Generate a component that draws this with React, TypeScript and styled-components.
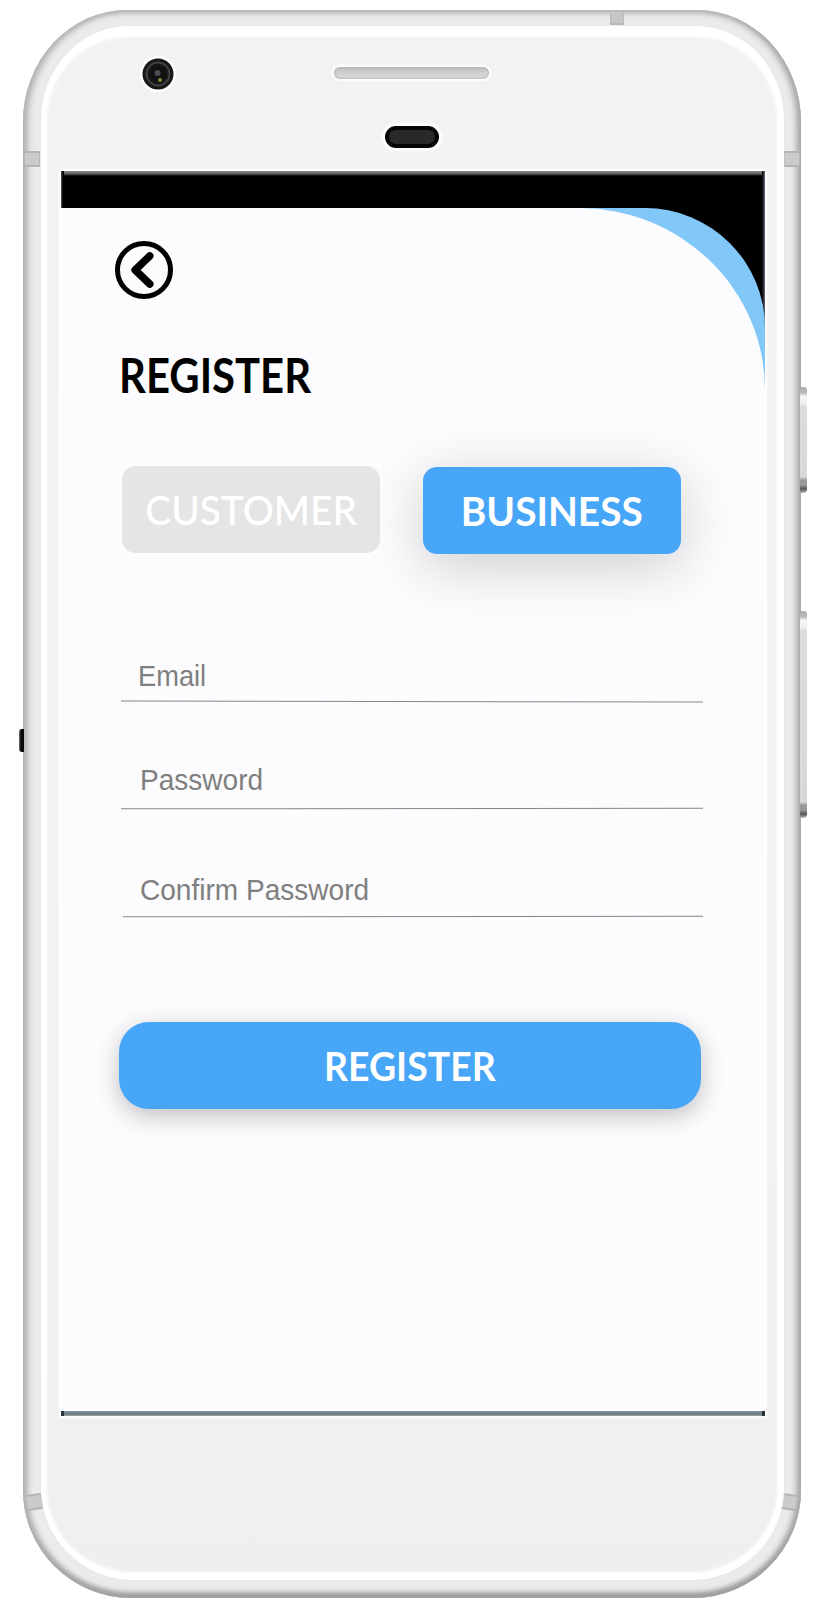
import React from 'react';
import styled, { createGlobalStyle } from 'styled-components';

const GlobalStyle = createGlobalStyle`
  * { box-sizing: border-box; }
  body { margin: 0; background: #fff; }
`;

const Stage = styled.main`
  width: 826px;
  height: 1606px;
  padding: 10px 25px 8px 23px;
  overflow: hidden;
  background: #fff;
`;

const Frame = styled.div`
  position: relative;
  width: 778px;
  height: 1588px;
  padding: 16px 17px 18px 18px;
  border-radius: 104px 104px 108px 108px / 112px 112px 108px 108px;
  background: #ebebeb;
  box-shadow:
    inset 5px 0 6px -1px #b2b2b2,
    inset -5px 0 6px -1px #a6a6a6,
    inset 0 4px 3px -1px #c8c8c8,
    inset 0 -6px 5px -1px #949494,
    inset 0 0 6px 4px #d4d4d4;
`;

const Face = styled.div`
  position: relative;
  width: 743px;
  height: 1554px;
  display: flex;
  flex-direction: column;
  padding: 0 13px 0 15px;
  border: solid #fff;
  border-width: 10px 6px 7px 5px;
  border-radius: 88px 88px 92px 92px / 94px 94px 92px 92px;
  background: linear-gradient(#f2f2f2, #f3f3f3 50%, #efefef);
  box-shadow: inset 0 0 3px 1px #fff, 0 0 2px #e2e2e2;
`;

const Bezel = styled.div`
  height: 135px;
  flex: none;
  display: flex;
  flex-direction: column;
  align-items: center;
  padding: 31px 3px 0 0;
  gap: 47px;
`;

const Speaker = styled.div`
  width: 155px;
  height: 12px;
  border-radius: 6px;
  background: linear-gradient(#bdbdbd, #cfcfcf 45%, #dcdcdc);
  box-shadow: 0 0 2px 2px #fff, inset 0 0 2px 1px #bbb;
`;

const Sensor = styled.div`
  width: 54px;
  height: 22px;
  border: 4px solid #060606;
  border-radius: 11px;
  background: #292929;
  box-shadow: 0 0 2px 3px #fff;
`;

const Camera = styled.svg`
  position: absolute;
  left: 94px;
  top: 20px;
`;

const Screen = styled.div`
  position: relative;
  flex: none;
  width: 704px;
  height: 1245px;
  padding-top: 37px;
  background: linear-gradient(90deg, #555, #000 2px, #000 701px, #667);
  box-shadow: 0 0 2px 2px #fff;
`;

const TopShade = styled.div`
  position: absolute;
  top: 0;
  left: 3px;
  right: 3px;
  height: 5px;
  background: linear-gradient(#8c8c8c, #666 50%, #000);
`;

const Accent = styled.div`
  height: 1203px;
  background: #81c8f9;
  border-top-right-radius: 120px;
`;

const Page = styled.section`
  height: 1203px;
  display: flex;
  flex-direction: column;
  align-items: flex-start;
  padding: 33px 0 0 54px;
  background: #fcfbfe;
  border-top-right-radius: 186px 182px;
  overflow: hidden;
`;

const BottomEdge = styled.div`
  height: 5px;
  background: linear-gradient(#7897a9, #6d7880 60%, #a5a5a5);
  border: solid #27333b;
  border-width: 0 3px;
`;

const BackButton = styled.button`
  display: block;
  width: 59px;
  height: 59px;
  padding: 0;
  border: 0;
  background: none;
`;

const Lettering = styled.span<{ $squeeze: number; $start?: boolean }>`
  display: inline-block;
  white-space: nowrap;
  transform: scaleX(${p => p.$squeeze});
  transform-origin: ${p => (p.$start ? '0' : '50%')} 50%;
`;

const Title = styled.h1`
  margin: 49px 0 0 4px;
  height: 52px;
  font: 700 47px/52px Lato, sans-serif;
  color: #000;
`;

const Choices = styled.div`
  display: flex;
  gap: 43px;
  margin: 65px 0 0 7px;
`;

const Choice = styled.button<{ $active?: boolean }>`
  width: 258px;
  height: 87px;
  margin-top: ${p => (p.$active ? 1 : 0)}px;
  padding: 0;
  border: 0;
  border-radius: 14px;
  display: flex;
  align-items: center;
  justify-content: center;
  color: #fff;
  background: ${p => (p.$active ? '#47a6f8' : '#e5e5e5')};
  box-shadow: ${p => (p.$active ? '0 12px 56px rgba(0,0,0,.19)' : 'none')};
  font: ${p => (p.$active ? 700 : 500)} 40px/48px Lato, sans-serif;
`;

const Fields = styled.div`
  width: 582px;
  margin: 105px 0 0 6px;
`;

const Field = styled.label<{ $height: number; $indent: number }>`
  height: ${p => p.$height}px;
  display: flex;
  flex-direction: column;
  font: 400 29px/34px "Liberation Sans", Arial, sans-serif;
  color: #7f7f7f;

  > span { margin-left: ${p => p.$indent}px; align-self: flex-start; }
`;

const Rule = styled.i<{ $gap: number; $tilt: number; $inset?: number }>`
  display: block;
  height: 1px;
  margin: ${p => p.$gap}px 0 0 ${p => p.$inset ?? 0}px;
  background: #858589;
  transform: rotate(${p => p.$tilt}deg);
`;

const Submit = styled.button`
  width: 582px;
  height: 87px;
  margin: 101px 0 0 4px;
  padding: 0;
  border: 0;
  border-radius: 30px;
  display: flex;
  align-items: center;
  justify-content: center;
  background: #47a6f8;
  color: #fff;
  box-shadow: 0 7px 25px rgba(0,0,0,.24);
  font: 700 40px/48px Lato, sans-serif;
`;

const AntennaBand = styled.i<{ $x: number; $y: number; $turn?: number }>`
  position: absolute;
  left: ${p => p.$x}px;
  top: ${p => p.$y}px;
  width: 16px;
  height: 16px;
  border: solid #b4b4b4;
  border-width: 2px 1px;
  background: #cbcbcb;
  transform: rotate(${p => p.$turn ?? 0}deg);
`;

const TopBand = styled.i`
  position: absolute;
  left: 587px;
  top: 3px;
  width: 14px;
  height: 12px;
  background: #c6c6c6;
  border: solid #b8b8b8;
  border-width: 0 1px 2px;
`;

const SideKey = styled.i<{ $y: number; $h: number }>`
  position: absolute;
  left: 777px;
  top: ${p => p.$y}px;
  width: 7px;
  height: ${p => p.$h}px;
  border-radius: 0 3px 4px 0;
  background: linear-gradient(
    #aaa, #bbb 6px, #f5f5f5 9px, #f1f1f1 17px, #dcdcdc 19px,
    #d8d8d8 calc(100% - 16px), #999 calc(100% - 13px), #999 calc(100% - 8px), #555 calc(100% - 4px), #bbb
  );
`;

const LeftMark = styled.i`
  position: absolute;
  left: -4px;
  top: 719px;
  width: 5px;
  height: 23px;
  border-radius: 3px 0 0 3px;
  background: linear-gradient(90deg, #777, #080808 40%);
`;

export default function App() {
  return (
    <>
      <GlobalStyle />
      <Stage>
        <Frame>
          <TopBand />
          <AntennaBand $x={1} $y={141} />
          <AntennaBand $x={761} $y={141} />
          <AntennaBand $x={3} $y={1484} $turn={-8} />
          <AntennaBand $x={758} $y={1484} $turn={8} />
          <SideKey $y={377} $h={106} />
          <SideKey $y={601} $h={207} />
          <LeftMark />
          <Face>
            <Camera width="36" height="36" viewBox="0 0 36 36">
              <circle cx="18" cy="18" r="18" fill="#fff" />
              <circle cx="18" cy="18" r="15.5" fill="#171717" />
              <circle cx="18" cy="18" r="11.5" fill="none" stroke="#404144" strokeWidth="2" />
              <circle cx="18" cy="18" r="8" fill="#111" />
              <circle cx="17.5" cy="17" r="3" fill="#4b4d54" />
              <circle cx="20" cy="24" r="2" fill="#85883f" />
            </Camera>
            <Bezel>
              <Speaker />
              <Sensor />
            </Bezel>
            <Screen>
              <TopShade />
              <Accent>
                <Page>
                  <BackButton aria-label="Back">
                    <svg width="59" height="59" viewBox="0 0 59 59" fill="none" stroke="#000">
                      <circle cx="29" cy="29" r="26.5" strokeWidth="5" />
                      <path d="M34.7 15 20.2 29l14.5 14" strokeWidth="7.6" strokeLinecap="round" strokeLinejoin="round" />
                    </svg>
                  </BackButton>
                  <Title>
                    <Lettering $start $squeeze={0.89}>REGISTER</Lettering>
                  </Title>
                  <Choices>
                    <Choice><Lettering $squeeze={0.97}>CUSTOMER</Lettering></Choice>
                    <Choice $active><Lettering $squeeze={0.97}>BUSINESS</Lettering></Choice>
                  </Choices>
                  <Fields>
                    <Field $height={104} $indent={17}>
                      <Lettering $start $squeeze={0.94}>Email</Lettering>
                      <Rule $gap={8} $tilt={0.1} />
                    </Field>
                    <Field $height={110} $indent={19}>
                      <Lettering $start $squeeze={0.967}>Password</Lettering>
                      <Rule $gap={11} $tilt={-0.05} />
                    </Field>
                    <Field $height={48} $indent={19}>
                      <Lettering $start $squeeze={0.967}>Confirm Password</Lettering>
                      <Rule $gap={9} $tilt={-0.05} $inset={2} />
                    </Field>
                  </Fields>
                  <Submit><Lettering $squeeze={0.935}>REGISTER</Lettering></Submit>
                </Page>
              </Accent>
              <BottomEdge />
            </Screen>
          </Face>
        </Frame>
      </Stage>
    </>
  );
}
